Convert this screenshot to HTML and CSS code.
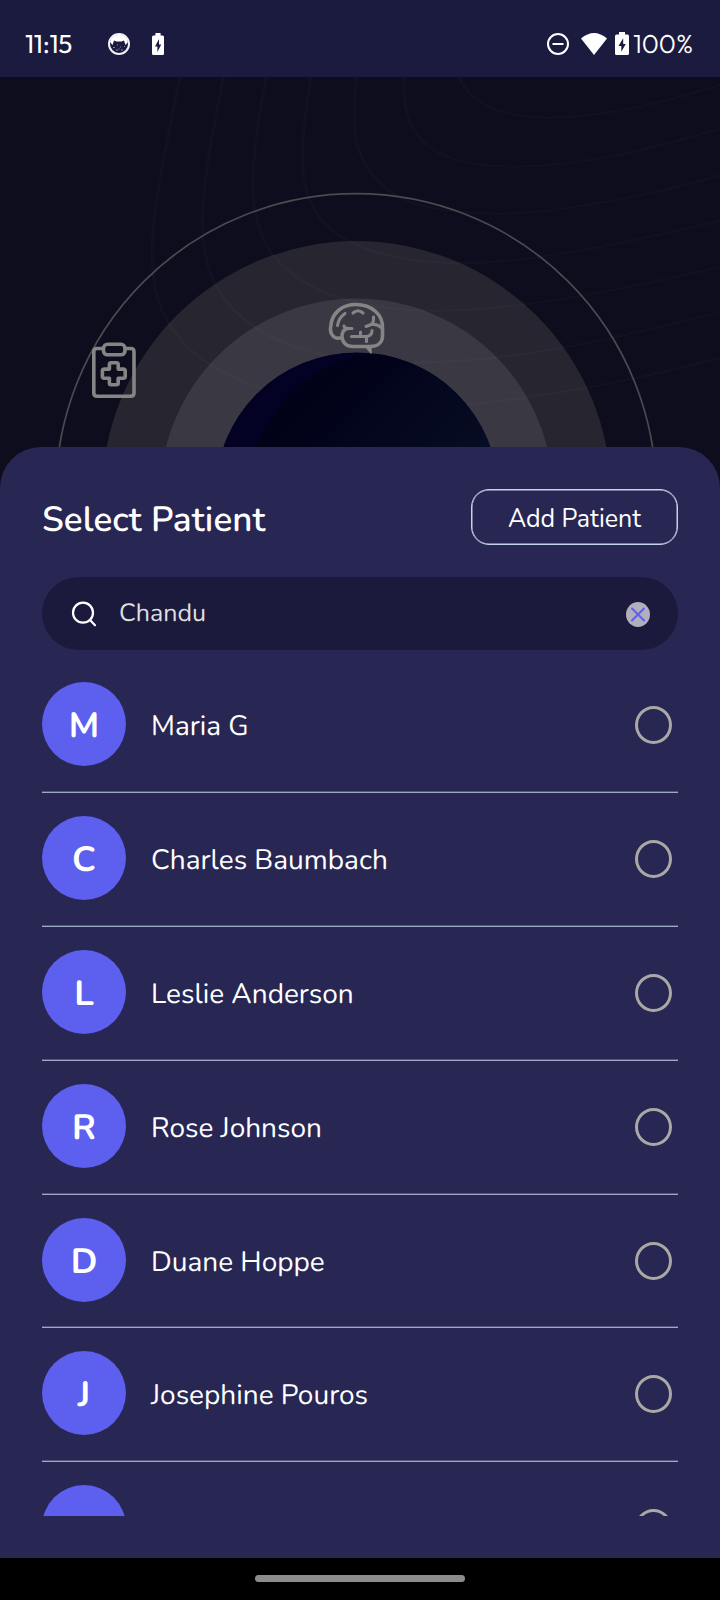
FILE: index.html
```
<!DOCTYPE html>
<html lang="en">
<head>
<meta charset="utf-8">
<title>Select Patient</title>
<link rel="stylesheet" href="styles.css">
</head>
<body>
<div class="screen">
  <header class="status">
    <span class="time">11:15</span>
    <svg class="cat" width="22" height="22" viewBox="0 0 22 22"><circle cx="11" cy="11" r="10" fill="#1b1b3f" stroke="#f1f1f6" stroke-width="2"/><path d="M2 9A9.2 9.2 0 0 1 20 9L17.500 12 16 7.500 13.500 8.500H8.500L6 7.500 4.500 12Z" fill="#fff"/><path d="M5 14.500h2M9 12h1M12 14h1M8 17h2M13 17h2M16 13.500h1M10.500 16h1" stroke="#8585a0"/></svg>
    <svg class="battery-left" width="12" height="22" viewBox="0 0 14 22" preserveAspectRatio="none"><path d="M4 0h6v2.500h2.500q1.500 0 1.500 1.500v16.500q0 1.500-1.500 1.500h-11Q0 22 0 20.500V4q0-1.500 1.500-1.500H4Z" fill="#fff"/><path d="M8.200 6L3.500 13.500h2.800V19l4.500-7.500H8.200Z" fill="#1b1b3f"/></svg>
    <span class="spacer"></span>
    <svg width="22" height="22" viewBox="0 0 22 22" fill="none" stroke="#fff" stroke-width="2"><circle cx="11" cy="11" r="10"/><path d="M5.500 11h11"/></svg>
    <svg class="wifi" width="26" height="22" viewBox="0 0 26 22"><path d="M0 5.500Q13-5.500 26 5.500L13 22Z" fill="#fff"/></svg>
    <svg class="battery" width="14" height="23" viewBox="0 0 14 22" preserveAspectRatio="none"><path d="M4 0h6v2.500h2.500q1.500 0 1.500 1.500v16.500q0 1.500-1.500 1.500h-11Q0 22 0 20.500V4q0-1.500 1.500-1.500H4Z" fill="#fff"/><path d="M8.200 6L3.500 13.500h2.800V19l4.500-7.500H8.200Z" fill="#1b1b3f"/></svg>
    <span class="percent">100%</span>
  </header>

  <svg class="scene" width="720" height="410" viewBox="0 77 720 410" fill="none">
    <defs>
      <clipPath id="core"><circle cx="356.800" cy="494" r="141.800"/></clipPath>
      <linearGradient id="planet" x1="0" y1="0" x2="1" y2="1"><stop offset="0" stop-color="#010114"/><stop offset=".25" stop-color="#02031a"/><stop offset=".6" stop-color="#070d24"/></linearGradient>
    </defs>
    <circle cx="356.500" cy="495.500" r="254.500" fill="#262530"/>
    <circle cx="356.500" cy="495" r="196.500" fill="#3a3843"/>
    <!-- contour lines -->
    <g class="contours" transform="matrix(.4592 0 0 .3333 0 70)">
      <path d="M1000 20C1020 90 1080 145 1200 143C1340 138 1460 90 1568 45"/>
      <path d="M881 20C875 160 900 290 1120 290C1290 288 1430 230 1568 177"/>
      <path d="M776 20C765 170 765 280 850 365C920 435 1100 450 1280 405C1400 380 1490 345 1568 316"/>
      <path d="M677 20C655 220 640 370 710 465C790 570 960 600 1150 565C1320 535 1450 490 1568 453"/>
      <path d="M580 20C545 270 530 450 600 565C700 720 900 750 1160 700C1320 670 1450 625 1568 592"/>
      <path d="M487 20C440 340 415 540 480 670C570 860 800 920 1150 850C1320 815 1450 765 1568 728"/>
      <path d="M392 20C340 380 300 600 365 755C460 980 760 1060 1130 985C1320 950 1450 905 1568 864"/>
    </g>
    <g clip-path="url(#core)"><circle cx="356.800" cy="494" r="141.800" fill="#030225"/><circle cx="390" cy="494" r="141.500" fill="url(#planet)"/></g>
    <circle cx="356" cy="494" r="300.300" stroke="#4b4a4f" stroke-width="1.700"/>
    <g stroke="#858585" stroke-width="3.600" stroke-linejoin="round" stroke-linecap="round">
      <path d="M103 348.500H97q-3.200 0-3.200 3.200v41.300q0 3.200 3.200 3.200h33.800q3.200 0 3.200-3.200v-41.300q0-3.200-3.200-3.200H125"/>
      <rect x="103.500" y="344.300" width="21.500" height="10.500" rx="4"/>
      <path d="M111.200 362.800h5.200q1.800 0 1.800 1.800v4.500h5q2 0 2 2v5.200q0 2-2 2h-5v4.700q0 1.800-1.800 1.800h-5.200q-1.800 0-1.800-1.800v-4.700h-5q-2 0-2-2v-5.200q0-2 2-2h5v-4.500q0-1.800 1.800-1.800Z"/>
    </g>
    <g stroke="#858585" stroke-width="3.600" stroke-linejoin="round" stroke-linecap="round">
      <path d="M342 337.500C333 340.500 329.500 333 330.800 326C332 312 343 304.500 356 304.500C371 304.500 383 314 382.500 328V336C382.500 343 377 346.500 370 346.500H353C339 346.500 339.500 328.500 348 328.500"/>
      <path stroke-width="3.100" d="M337.500 325.500q1-7.500 7.500-12M353 313q5-4.500 10 0M344 326q1 3 4 2.500h4M373.500 317q.5 7-3.500 8l-4 1.500M371 324.500q7-1 11 4M351.500 336.500h14q6.500 0 6.500-6M360.500 336v-4M366.500 337v4.500"/>
      <path d="M366 347l5 6v-6Z" fill="#858585" stroke-width="1.500"/>
    </g>
  </svg>

  <main class="sheet">
    <div class="heading"><h1>Select Patient</h1><button class="add"><span>Add Patient</span></button></div>
    <div class="search">
      <svg width="26" height="26" viewBox="0 0 26 26" fill="none" stroke="#fff" stroke-width="2.200" stroke-linecap="round"><circle cx="12" cy="11.700" r="10"/><path d="M19 19L24 24.300"/></svg>
      <span class="query">Chandu</span>
      <svg width="24" height="25" viewBox="0 0 24 25"><ellipse cx="12" cy="12.500" rx="12" ry="12.500" fill="#b1afbd"/><path d="M6 6.500l12 12M18 6.500l-12 12" stroke="#5d5fef" stroke-width="2" stroke-linecap="round"/></svg>
    </div>
    <ul class="patients">
      <li><b class="avatar">M</b><span class="name">Maria G</span><i class="radio"></i></li>
      <li><b class="avatar">C</b><span class="name">Charles Baumbach</span><i class="radio"></i></li>
      <li><b class="avatar">L</b><span class="name">Leslie Anderson</span><i class="radio"></i></li>
      <li><b class="avatar">R</b><span class="name">Rose Johnson</span><i class="radio"></i></li>
      <li class="tight"><b class="avatar">D</b><span class="name">Duane Hoppe</span><i class="radio"></i></li>
      <li><b class="avatar">J</b><span class="name">Josephine Pouros</span><i class="radio"></i></li>
      <li><b class="avatar"></b><span class="name"></span><i class="radio"></i></li>
    </ul>
  </main>
  <footer class="nav"><div class="handle"></div></footer>
</div>
</body>
</html>
```
FILE: styles.css
```
* { box-sizing: border-box; }
body { margin: 0; background: #0e0d1d; color: #fff; font-family: Nunito, Lato, sans-serif; text-rendering: geometricPrecision; }
.screen { width: 720px; height: 1600px; overflow: hidden; display: flex; flex-direction: column; background: #0e0d1d; }
svg { display: block; flex: none; }
.status { height: 77px; flex: none; background: #1b1b3f; display: flex; align-items: center; padding: 10px 25px 0; font-family: Outfit, Montserrat, Nunito, sans-serif; font-size: 26px; }
.time { width: 83px; white-space: nowrap; letter-spacing: -.2px; }
.battery-left { margin-left: 22px; }
.spacer { flex: 1; }
.wifi { margin-left: 12px; }
.battery { margin: 0 0 0 8px; }
.percent { width: 62px; margin-left: 4px; white-space: nowrap; font-weight: 300; }
.scene { margin-bottom: -40px; }
.contours { stroke: #fff; stroke-opacity: .018; stroke-width: 7; }
.sheet { position: relative; height: 1111px; flex: none; background: #282653; border-radius: 41px 41px 0 0; padding: 42px 42px; display: flex; flex-direction: column; }
.heading { display: flex; justify-content: space-between; height: 56px; align-items: center; }
h1 { margin: 7px 0 0; font-size: 35px; line-height: 42px; font-weight: 600; white-space: nowrap; letter-spacing: .1px; }
.add { width: 207px; height: 56px; border: 1.5px solid #c3d4e8; box-shadow: inset 0 0 0 .5px #c3d4e8; border-radius: 18px; background: none; color: #fff; font: 400 25px/30px Nunito, Lato, sans-serif; padding: 4px 0 0; white-space: nowrap; }
.search { height: 73px; flex: none; margin-top: 32px; padding: 1px 28px 0 29px; border-radius: 37px; background: #1b1a3d; display: flex; align-items: center; }
.query { flex: 1; margin-left: 22px; padding-bottom: 3px; font-size: 25px; color: #dedede; }
.patients { list-style: none; margin: 8px 0 0; padding: 0; height: 858px; overflow: hidden; flex: none; }
li { height: 134px; padding: 24px 6px 0 0; display: flex; align-items: flex-start; background: linear-gradient(#555580, #555580) 0 100% / 100% 1px no-repeat; box-shadow: 0 1px 0 #9ca9c6; }
.tight { height: 133px; }
.avatar { width: 84px; height: 84px; border-radius: 50%; background: #5d5fef; display: flex; align-items: center; justify-content: center; font-size: 35px; line-height: 42px; padding-top: 6px; }
.name { flex: 1; margin-left: 25px; font-size: 28px; line-height: 34px; padding-top: 27px; white-space: nowrap; }
.radio { width: 37px; height: 38px; margin-top: 24px; border: 3px solid #a9a8a6; border-radius: 50%; }
.nav { flex: 1; background: #000; padding-top: 17px; }
.handle { width: 210px; height: 7px; margin: 0 auto; border-radius: 4px; background: #8c8c8c; }
```
